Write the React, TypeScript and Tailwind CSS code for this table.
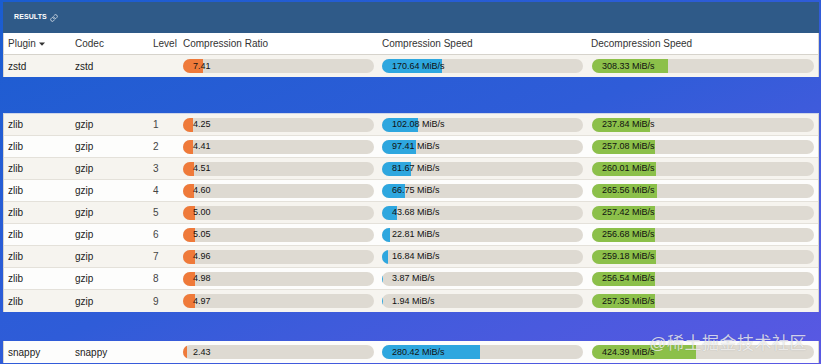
import { Link } from "lucide-react";

type Row = {
  plugin: string;
  codec: string;
  level?: number;
  ratio: number;
  speed: number;
  decomp: number;
};

const zstd: Row[] = [{ plugin: "zstd", codec: "zstd", ratio: 7.41, speed: 170.64, decomp: 308.33 }];

const zlib: Row[] = [
  { plugin: "zlib", codec: "gzip", level: 1, ratio: 4.25, speed: 102.08, decomp: 237.84 },
  { plugin: "zlib", codec: "gzip", level: 2, ratio: 4.41, speed: 97.41, decomp: 257.08 },
  { plugin: "zlib", codec: "gzip", level: 3, ratio: 4.51, speed: 81.67, decomp: 260.01 },
  { plugin: "zlib", codec: "gzip", level: 4, ratio: 4.6, speed: 66.75, decomp: 265.56 },
  { plugin: "zlib", codec: "gzip", level: 5, ratio: 5.0, speed: 43.68, decomp: 257.42 },
  { plugin: "zlib", codec: "gzip", level: 6, ratio: 5.05, speed: 22.81, decomp: 256.68 },
  { plugin: "zlib", codec: "gzip", level: 7, ratio: 4.96, speed: 16.84, decomp: 259.18 },
  { plugin: "zlib", codec: "gzip", level: 8, ratio: 4.98, speed: 3.87, decomp: 256.54 },
  { plugin: "zlib", codec: "gzip", level: 9, ratio: 4.97, speed: 1.94, decomp: 257.35 },
];

const snappy: Row[] = [{ plugin: "snappy", codec: "snappy", ratio: 2.43, speed: 280.42, decomp: 424.39 }];

const cols = "grid grid-cols-[67px_78px_30px_199px_209px_1fr]";

function Bar({ fill, width, label }: { fill: string; width: number; label: string }) {
  return (
    <div className="relative h-[14px] rounded-full bg-[#dedad2] overflow-hidden flex items-center">
      <div className={`absolute left-0 top-0 bottom-0 ${fill}`} style={{ width: `${width}px` }} />
      <span className="relative pl-[10px] text-[9px] leading-none text-[#111]">{label}</span>
    </div>
  );
}

function DataRow({ row, shaded }: { row: Row; shaded: boolean }) {
  return (
    <div
      className={`${cols} h-[22px] items-center border-b border-[#e4e1da] last:border-b-0 text-[10px] text-[#222] ${
        shaded ? "bg-[#f6f4ef]" : "bg-[#fdfdfc]"
      }`}
    >
      <div className="pl-[4px]">{row.plugin}</div>
      <div className="pl-[4px]">{row.codec}</div>
      <div className="pl-[4px] text-[#444]">{row.level ?? ""}</div>
      <div className="pl-[4px] pr-[4px]">
        <Bar fill="bg-[#ef7a3a]" width={(row.ratio - 1.19) * 3.2} label={row.ratio.toFixed(2)} />
      </div>
      <div className="pl-[4px] pr-[4px]">
        <Bar fill="bg-[#2ea7df]" width={row.speed / 2.85} label={`${row.speed.toFixed(2)} MiB/s`} />
      </div>
      <div className="pl-[5px] pr-[4px]">
        <Bar fill="bg-[#8cc04a]" width={row.decomp / 4.07} label={`${row.decomp.toFixed(2)} MiB/s`} />
      </div>
    </div>
  );
}

export default function App() {
  return (
    <div
      className="relative w-[821px] h-[364px] overflow-hidden bg-linear-to-br from-[#1a5dd0] via-[#2f5cd8] to-[#5a58e3] pt-[2px] pl-[3px] pr-[2px]"
      style={{ fontFamily: '"Liberation Sans", Arial, sans-serif' }}
    >
      {/* Panel header */}
      <div className="h-[31px] bg-[#2f5a88] flex items-center pl-[11px] gap-[3px]">
        <span className="text-[7px] font-bold text-white tracking-[0.1px]">RESULTS</span>
        <Link className="w-[8px] h-[8px] text-white/80" strokeWidth={2.5} />
      </div>

      {/* Column headers + first group */}
      <div className="bg-white border-x border-[#d8d5cf]">
        <div className={`${cols} h-[22px] items-center border-b border-[#d6d3cc] text-[10px] text-[#333]`}>
          <div className="pl-[4px] flex items-center gap-[3px]">
            Plugin
            <svg width="6" height="4" viewBox="0 0 6 4">
              <path d="M0 0.5h6L3 3.8z" fill="#333" />
            </svg>
          </div>
          <div className="pl-[4px]">Codec</div>
          <div className="pl-[4px]">Level</div>
          <div className="pl-[4px]">Compression Ratio</div>
          <div className="pl-[4px]">Compression Speed</div>
          <div className="pl-[4px]">Decompression Speed</div>
        </div>
        {zstd.map((r, i) => (
          <DataRow key={i} row={r} shaded />
        ))}
      </div>

      <div className="mt-[36px] border-x border-[#d8d5cf] border-t border-t-[#cfd6e8]">
        {zlib.map((r, i) => (
          <DataRow key={i} row={r} shaded={i % 2 === 0} />
        ))}
      </div>

      <div className="mt-[29px] border-x border-[#d8d5cf]">
        {snappy.map((r, i) => (
          <DataRow key={i} row={r} shaded={false} />
        ))}
      </div>

      {/* Watermark */}
      <div
        className="absolute right-[14px] bottom-[12px] text-[17px] leading-none text-white/75 tracking-[0.5px]"
        style={{ fontFamily: '"Liberation Sans", "Noto Sans CJK SC", sans-serif', textShadow: "0 0 1px rgba(0,0,0,0.25)" }}
      >
        @稀土掘金技术社区
      </div>
    </div>
  );
}
